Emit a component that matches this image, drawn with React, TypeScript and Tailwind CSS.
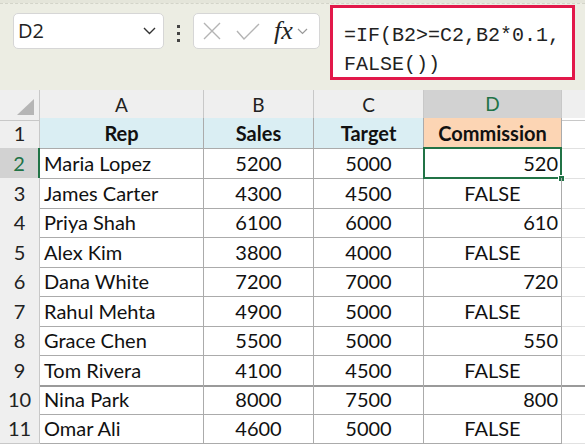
const rows: [string, string, string, string, "r" | "c"][] = [
  ["Maria Lopez", "5200", "5000", "520", "r"],
  ["James Carter", "4300", "4500", "FALSE", "c"],
  ["Priya Shah", "6100", "6000", "610", "r"],
  ["Alex Kim", "3800", "4000", "FALSE", "c"],
  ["Dana White", "7200", "7000", "720", "r"],
  ["Rahul Mehta", "4900", "5000", "FALSE", "c"],
  ["Grace Chen", "5500", "5000", "550", "r"],
  ["Tom Rivera", "4100", "4500", "FALSE", "c"],
  ["Nina Park", "8000", "7500", "800", "r"],
  ["Omar Ali", "4600", "5000", "FALSE", "c"],
];

const cols = "grid-cols-[40px_164px_110px_110px_138px_1fr]";

function Toolbar() {
  return (
    <div className="relative h-[90px] bg-[#ecede3] border-t-[3px] border-[#e4e5da]">
      <div className="absolute left-0 right-0 top-0 border-t border-dashed border-[#d3d4c9]" />
      <div className="flex items-start">
        {/* name box */}
        <div className="ml-[13px] mt-[10px] flex h-[36px] w-[151px] items-center justify-between rounded-[5px] border border-[#d6d6d6] bg-white pl-[4px] pr-[7px]">
          <span className="text-[20px] text-[#222]" style={{ fontFamily: "'Open Sans', sans-serif" }}>
            D2
          </span>
          <svg width="13" height="8" viewBox="0 0 13 8" fill="none" stroke="#333" strokeWidth="1.4">
            <path d="M1 1l5.5 5.5L12 1" />
          </svg>
        </div>
        {/* dots */}
        <div className="mx-[13px] mt-[22px] flex flex-col gap-[4px]">
          <div className="h-[3px] w-[3px] bg-[#444]" />
          <div className="h-[3px] w-[3px] bg-[#444]" />
          <div className="h-[3px] w-[3px] bg-[#444]" />
        </div>
        {/* fx box */}
        <div className="mt-[10px] flex h-[36px] w-[127px] items-center rounded-[5px] border border-[#d6d6d6] bg-white pl-[9px]">
          <svg width="18" height="18" viewBox="0 0 18 18" stroke="#b4b4b4" strokeWidth="1.4">
            <path d="M1 1l16 16M17 1L1 17" />
          </svg>
          <svg className="ml-[15px]" width="24" height="17" viewBox="0 0 24 17" fill="none" stroke="#b4b4b4" strokeWidth="1.4">
            <path d="M1 8l7 8L23 1" />
          </svg>
          <span
            className="ml-[14px] text-[26px] leading-none italic text-[#222]"
            style={{ fontFamily: "'Liberation Serif', serif" }}
          >
            fx
          </span>
          <svg className="ml-[4px]" width="11" height="7" viewBox="0 0 11 7" fill="none" stroke="#999" strokeWidth="1.2">
            <path d="M1 1l4.5 4.5L10 1" />
          </svg>
        </div>
        {/* formula box */}
        <div className="ml-[10px] mt-[2px] h-[75px] w-[245px] border-[3px] border-[#e2184a] bg-white pl-[11px] pt-[13px]">
          <div
            className="text-[20px] leading-[29px] text-[#222]"
            style={{ fontFamily: "'Liberation Mono', monospace" }}
          >
            =IF(B2&gt;=C2,B2*0.1,
            <br />
            FALSE())
          </div>
        </div>
      </div>
    </div>
  );
}

function ColHeader() {
  const letters = ["A", "B", "C"];
  return (
    <div className={`grid ${cols} h-[28px] bg-[#efefef] text-[19px] text-[#222]`}>
      <div className="relative border-r border-b border-[#c8c8c8]">
        <div className="absolute bottom-[5px] right-[5px] h-0 w-0 border-b-[16px] border-l-[17px] border-b-[#b5b5b5] border-l-transparent" />
      </div>
      {letters.map((l) => (
        <div key={l} className="flex items-center justify-center border-r border-b border-[#c8c8c8]">
          {l}
        </div>
      ))}
      <div className="flex items-center justify-center border-r border-[#c8c8c8] border-b-2 border-b-[#217346] bg-[#d2d2d2] text-[#217346]">
        D
      </div>
      <div className="border-b border-[#c8c8c8]" />
    </div>
  );
}

export default function App() {
  const line = "border-r border-b border-[#ababab]";
  return (
    <div
      className="h-[446px] w-[585px] overflow-hidden bg-white"
      style={{ fontFamily: "Lato, 'Noto Sans', sans-serif" }}
    >
      <Toolbar />
      <ColHeader />
      {/* row 1 */}
      <div className={`grid ${cols} h-[30px] text-[20px] font-bold text-[#111]`}>
        <div className="flex items-center justify-center border-r border-b border-[#c8c8c8] bg-[#efefef] font-normal text-[#222]">
          1
        </div>
        <div className={`flex items-center justify-center bg-[#daeef3] ${line}`}>Rep</div>
        <div className={`flex items-center justify-center bg-[#daeef3] ${line}`}>Sales</div>
        <div className={`flex items-center justify-center bg-[#daeef3] ${line}`}>Target</div>
        <div className={`flex items-center justify-center bg-[#fcd5b4] ${line}`}>Commission</div>
        <div className="border-b border-[#e1e1e1]" />
      </div>
      {rows.map((r, i) => {
        const n = i + 2;
        const sel = n === 2;
        const brk = n === 9;
        const bottom = brk ? "border-b-2 border-b-[#9a9a9a]" : "";
        return (
          <div key={n} className={`grid ${cols} ${brk ? "h-[29px]" : "h-[29.5px]"} text-[20px] text-[#111]`}>
            <div
              className={`flex items-center justify-center border-b border-[#c8c8c8] ${bottom} ${
                sel ? "border-r-2 border-r-[#217346] bg-[#d2d2d2] text-[#217346]" : "border-r bg-[#efefef] text-[#222]"
              }`}
            >
              {n}
            </div>
            <div className={`flex items-center pl-[4px] ${line} ${bottom}`}>{r[0]}</div>
            <div className={`flex items-center justify-center ${line} ${bottom}`}>{r[1]}</div>
            <div className={`flex items-center justify-center ${line} ${bottom}`}>{r[2]}</div>
            <div
              className={`relative flex items-center ${r[4] === "r" ? "justify-end pr-[3px]" : "justify-center"} ${line} ${bottom}`}
            >
              {sel && (
                <>
                  <div className="absolute -left-[1px] -top-[1px] -right-[1px] -bottom-[1px] border-2 border-[#217346]" />
                  <div className="absolute -bottom-[4px] -right-[4px] h-[7px] w-[7px] border border-white bg-[#217346]" />
                </>
              )}
              <span className="relative">{r[3]}</span>
            </div>
            <div className={`border-b border-[#e1e1e1] ${bottom}`} />
          </div>
        );
      })}
    </div>
  );
}
